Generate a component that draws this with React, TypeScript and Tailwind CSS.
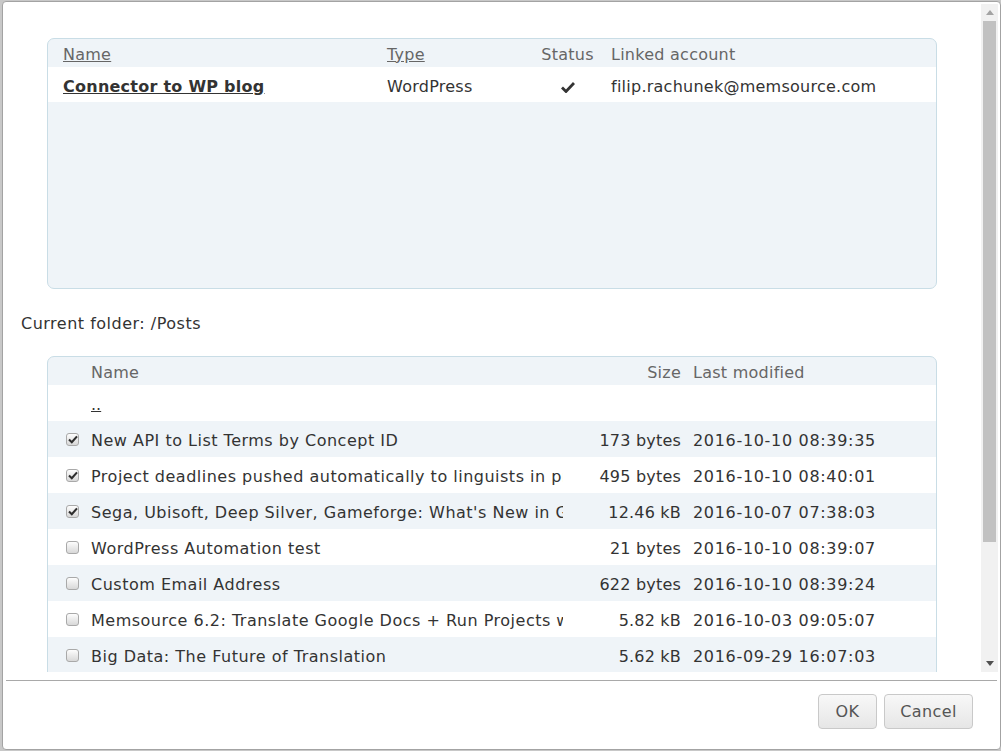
import React from "react";

type FileRow = {
  name: string;
  size: string;
  modified: string;
  checked: boolean;
};

const files: FileRow[] = [
  { name: "New API to List Terms by Concept ID", size: "173 bytes", modified: "2016-10-10 08:39:35", checked: true },
  { name: "Project deadlines pushed automatically to linguists in projects", size: "495 bytes", modified: "2016-10-10 08:40:01", checked: true },
  { name: "Sega, Ubisoft, Deep Silver, Gameforge: What's New in Gaming Localization", size: "12.46 kB", modified: "2016-10-07 07:38:03", checked: true },
  { name: "WordPress Automation test", size: "21 bytes", modified: "2016-10-10 08:39:07", checked: false },
  { name: "Custom Email Address", size: "622 bytes", modified: "2016-10-10 08:39:24", checked: false },
  { name: "Memsource 6.2: Translate Google Docs + Run Projects with Automation", size: "5.82 kB", modified: "2016-10-03 09:05:07", checked: false },
  { name: "Big Data: The Future of Translation", size: "5.62 kB", modified: "2016-09-29 16:07:03", checked: false },
  { name: "Memsource Cloud 6.1: New Connectors", size: "4.10 kB", modified: "2016-09-20 11:12:45", checked: false },
];

const Checkbox = ({ checked }: { checked: boolean }) => (
  <div className="w-[13px] h-[13px] rounded-[3px] border border-[#a9a9a9] bg-gradient-to-b from-[#fdfdfd] to-[#d8d8d8] flex items-center justify-center">
    {checked && (
      <svg width="10" height="9" viewBox="0 0 10 9">
        <path d="M1 4.6 L3.8 7.3 L9 1.4" fill="none" stroke="#2e2e2e" strokeWidth="2.1" />
      </svg>
    )}
  </div>
);

const App: React.FC = () => {
  return (
    <div className="w-[1001px] h-[751px] bg-[#c8c8c8] pt-[1px] pl-[2px] font-['DejaVu_Sans',sans-serif] text-[#333]">
      <div className="w-[999px] h-[749px] bg-white border border-[#a3a3a3] rounded-[4px] flex flex-col">
        {/* scrollable body */}
        <div className="h-[670px] flex">
          <div className="flex-1 overflow-hidden pt-[36px]">
            <div className="ml-[44px] w-[890px] h-[251px] border border-[#c9dde6] rounded-[7px] bg-[#eff4f8] text-[16px] tracking-[0.25px]">
              <div className="h-[28px] pt-[3px] grid grid-cols-[324px_150px_61px_1fr] items-center pl-[15px] text-[#666]">
                <span className="underline">Name</span>
                <span className="underline">Type</span>
                <span className="text-center">Status</span>
                <span className="pl-[13px]">Linked account</span>
              </div>
              <div className="h-[35px] pt-[4px] bg-white grid grid-cols-[324px_150px_61px_1fr] items-center pl-[15px]">
                <span className="font-bold underline">Connector to WP blog</span>
                <span>WordPress</span>
                <span className="flex justify-center">
                  <svg width="14" height="12" viewBox="0 0 14 12">
                    <path d="M1 6.5 L5 10.5 L13 2" fill="none" stroke="#333" strokeWidth="2.8" />
                  </svg>
                </span>
                <span className="pl-[13px]">filip.rachunek@memsource.com</span>
              </div>
            </div>

            <div className="ml-[18px] mt-[23px] h-[24px] leading-[24px] text-[16px] tracking-[0.5px]">Current folder: /Posts</div>

            <div className="ml-[44px] mt-[20px] w-[890px] border border-[#c9dde6] rounded-[7px] bg-[#eff4f8] text-[16px] overflow-hidden">
              <div className="h-[28px] pt-[3px] grid grid-cols-[43px_472px_118px_1fr] items-center text-[#666] tracking-[0.25px]">
                <span />
                <span>Name</span>
                <span className="text-right">Size</span>
                <span className="pl-[12px]">Last modified</span>
              </div>
              <div className="h-[36px] pt-[3px] bg-white grid grid-cols-[43px_472px_118px_1fr] items-center">
                <span />
                <span className="underline">..</span>
                <span />
                <span />
              </div>
              {files.map((f, i) => (
                <div
                  key={f.name}
                  className={`h-[36px] grid grid-cols-[43px_472px_118px_1fr] items-center ${i % 2 === 0 ? "bg-[#eff4f8]" : "bg-white"}`}
                >
                  <span className="pl-[18px] pt-[1px]">
                    <Checkbox checked={f.checked} />
                  </span>
                  <span className="pt-[3px] whitespace-nowrap overflow-hidden tracking-[0.5px]">{f.name}</span>
                  <span className="pt-[3px] text-right whitespace-nowrap tracking-[0.2px]">{f.size}</span>
                  <span className="pt-[3px] pl-[12px] whitespace-nowrap tracking-[0.68px]">{f.modified}</span>
                </div>
              ))}
            </div>
          </div>

          {/* scrollbar */}
          <div className="w-[17px] mr-[2px] mt-[2px] bg-[#f1f1f1] flex flex-col">
            <div className="h-[17px] flex items-center justify-center">
              <svg width="8" height="5" viewBox="0 0 8 5">
                <path d="M0 5 L4 0 L8 5 Z" fill="#a3a3a3" />
              </svg>
            </div>
            <div className="mx-[2px] h-[521px] bg-[#c1c1c1]" />
            <div className="flex-1" />
            <div className="h-[17px] flex items-center justify-center">
              <svg width="8" height="5" viewBox="0 0 8 5">
                <path d="M0 0 L8 0 L4 5 Z" fill="#505050" />
              </svg>
            </div>
          </div>
        </div>

        <div className="mt-[8px] mx-[3px] h-px bg-[#a9a9a9]" />

        <div className="pt-[13px] pr-[27px] flex justify-end gap-[7px] text-[16px] text-[#555] tracking-[0.4px]">
          <button className="w-[59px] h-[35px] border border-[#c9c9c9] rounded-[4px] bg-gradient-to-b from-[#f8f8f8] to-[#e6e6e6]">
            OK
          </button>
          <button className="w-[89px] h-[35px] border border-[#c9c9c9] rounded-[4px] bg-gradient-to-b from-[#f8f8f8] to-[#e6e6e6]">
            Cancel
          </button>
        </div>
      </div>
    </div>
  );
};

export default App;
